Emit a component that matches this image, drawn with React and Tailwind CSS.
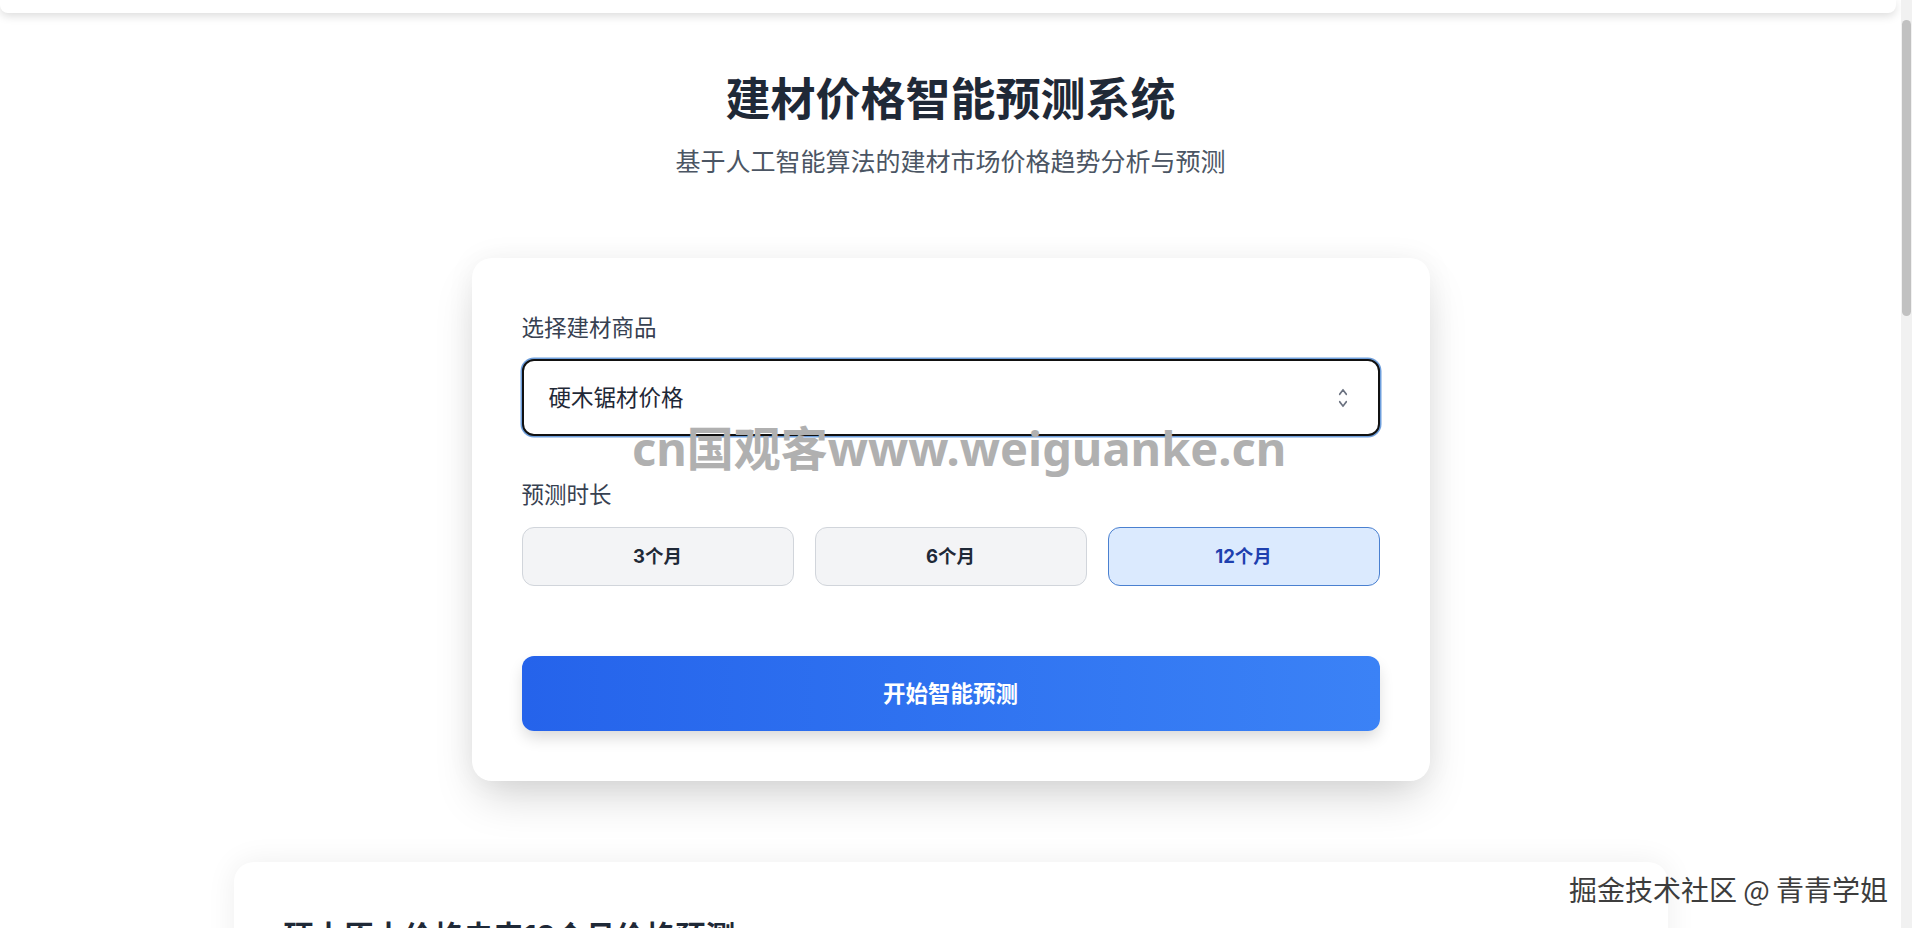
import React from "react";

const FONT = { fontFamily: 'Inter, "Noto Sans CJK SC", "Noto Sans", sans-serif' };

function ChevronsUpDown() {
  return (
    <svg width="20" height="26" viewBox="0 0 24 24" fill="none" stroke="#6b7280" strokeWidth="1.8" strokeLinecap="round" strokeLinejoin="round" preserveAspectRatio="none">
      <path d="m8 15.5 4 4 4-4" />
      <path d="m8 8.5 4-4 4 4" />
    </svg>
  );
}

export default function App() {
  const periods = ["3个月", "6个月", "12个月"];
  const selected = 2;
  return (
    <div className="flex h-[928px] w-full overflow-hidden bg-white" style={FONT}>
      <div className="relative flex-1 overflow-hidden">
        <div className="h-[13px] mr-[5px] rounded-b-[8px] bg-white shadow-[0_3px_10px_rgba(0,0,0,0.14)]" />

        <div className="mt-[60px] text-center">
          <h1 className="text-[45px] leading-[54px] font-bold text-[#1f2937]">建材价格智能预测系统</h1>
          <p className="mt-[16px] text-[25px] leading-[38px] text-[#4b5563]">基于人工智能算法的建材市场价格趋势分析与预测</p>
        </div>

        <div className="mx-auto mt-[77px] w-[958px] rounded-[20px] bg-white p-[50px] pb-[50px] shadow-[0_22px_45px_-8px_rgba(0,0,0,0.17),0_0_30px_rgba(0,0,0,0.05)]">
          <div className="text-[22.5px] leading-[40px] text-[#374151]">选择建材商品</div>
          <div className="mt-[11px] flex h-[77px] items-center justify-between rounded-[12px] border-2 border-[#111111] bg-white pl-[25px] pr-[25px] shadow-[0_0_0_1.5px_#6f9fdc]">
            <span className="text-[22.5px] text-[#1f2937]">硬木锯材价格</span>
            <ChevronsUpDown />
          </div>

          <div className="mt-[39px] text-[22.5px] leading-[40px] text-[#374151]">预测时长</div>
          <div className="mt-[12px] grid grid-cols-3 gap-[21px]">
            {periods.map((p, i) =>
              i === selected ? (
                <div key={p} className="flex h-[59px] items-center justify-center rounded-[12px] border border-[#4a80d0] bg-[#dbeafe] text-[18.5px] font-bold text-[#1e40af]">
                  {p}
                </div>
              ) : (
                <div key={p} className="flex h-[59px] items-center justify-center rounded-[12px] border border-[#d1d5db] bg-[#f3f4f6] text-[18.5px] font-bold text-[#1f2937]">
                  {p}
                </div>
              )
            )}
          </div>

          <div className="mt-[70px] flex h-[75px] items-center justify-center rounded-[12px] bg-gradient-to-r from-[#2563eb] to-[#3b82f6] text-[22.5px] font-bold text-white shadow-[0_8px_16px_-2px_rgba(0,0,0,0.16)]">
            开始智能预测
          </div>
        </div>

        <div className="mx-auto mt-[81px] w-[1434px] rounded-[20px] bg-white p-[50px] shadow-[0_0_30px_rgba(0,0,0,0.07)]">
          <h2 className="mt-[4px] text-[30px] leading-[40px] font-bold text-[#1f2937]">硬木原木价格未来12个月价格预测</h2>
          <div className="h-[300px]" />
        </div>

        <div className="pointer-events-none absolute left-[632px] top-[420px] whitespace-nowrap text-[47px] leading-[56px] font-bold text-[#b0b0b0]" style={{ fontFamily: '"Noto Sans", "Noto Sans CJK SC", sans-serif' }}>
          cn国观客www.weiguanke.cn
        </div>

        <div className="pointer-events-none absolute right-[13px] top-[870px] whitespace-nowrap text-[28px] leading-[38px] text-[#3d3d3d] [text-shadow:0_0_2px_#fff,0_0_2px_#fff]" style={{ fontFamily: '"Noto Sans CJK SC", sans-serif' }}>
          掘金技术社区 @ 青青学姐
        </div>
      </div>

      <div className="w-[11px] shrink-0 bg-[#f1f1f1] pt-[20px]">
        <div className="mx-auto h-[296px] w-[9px] rounded-full bg-[#c1c1c1]" />
      </div>
    </div>
  );
}
